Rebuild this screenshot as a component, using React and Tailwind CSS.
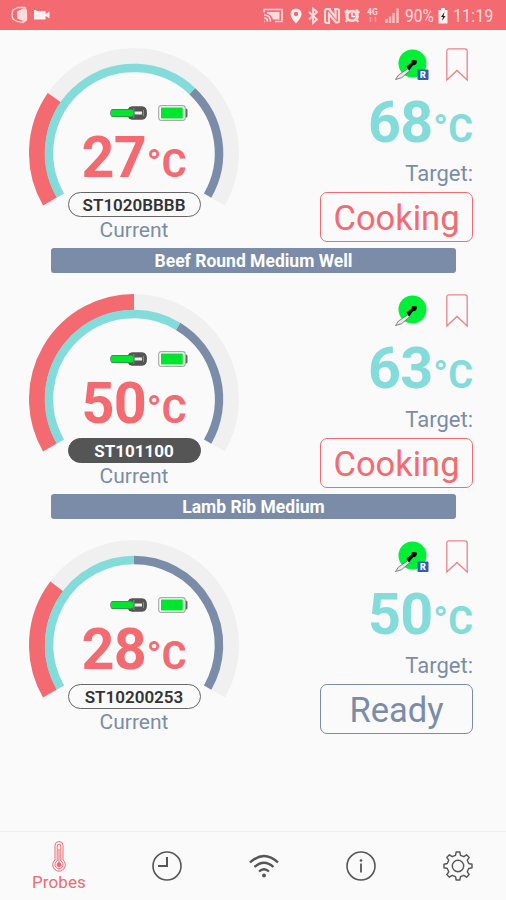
const RED = "#f36a71";
const TEAL = "#83dcda";
const SLATE = "#7a8ca8";

const probes = [
  {
    id: "ST1020BBBB",
    current: 27,
    target: 68,
    status: "Cooking",
    repeater: true,
    recipe: "Beef Round Medium Well",
  },
  {
    id: "ST101100",
    current: 50,
    target: 63,
    status: "Cooking",
    selected: true,
    recipe: "Lamb Rib Medium",
  },
  {
    id: "ST10200253",
    current: 28,
    target: 50,
    status: "Ready",
    repeater: true,
  },
];

// the gauge covers 240 degrees, 0 is bottom left and 100 is bottom right
const point = (value, r) => {
  const angle = ((210 - value * 2.4) * Math.PI) / 180;
  return `${105 + r * Math.cos(angle)} ${105 - r * Math.sin(angle)}`;
};

const arc = (from, to, r) => {
  const large = (to - from) * 2.4 > 180 ? 1 : 0;
  return `M${point(from, r)}A${r} ${r} 0 ${large} 1 ${point(to, r)}`;
};

const Gauge = ({ current, target }) => (
  <svg
    className="col-start-1 row-start-1 h-[160px] w-[210px]"
    viewBox="0 0 210 160"
    fill="none"
  >
    <path d={arc(0, 100, 97)} stroke="#f0f0f0" strokeWidth="16" />
    <path d={arc(0, current, 97)} stroke={RED} strokeWidth="16" />
    <path d={arc(target, 100, 85)} stroke={SLATE} strokeWidth="8.5" />
    <path d={arc(0, target, 85)} stroke={TEAL} strokeWidth="8.5" />
  </svg>
);

const ProbeLevel = () => (
  <svg className="h-[14px] w-[37px]" viewBox="0 0 37 14">
    <path
      d="M22 .3h10q5 0 5 6.700t-5 6.700H22q-3 0-4-2.700H3Q.3 11 .3 7T3 3h15q1-2.700 4-2.700z"
      fill="#555"
    />
    <rect x="1" y="3.600" width="22" height="6.800" rx="1.500" fill="#00e62e" />
    <rect x="24.500" y="5.500" width="7.500" height="3" fill="#eee" />
    <path d="M23.800 2v10M33.500 4v6" stroke="#8b8b8b" strokeWidth="1" />
  </svg>
);

const Battery = () => (
  <svg className="h-[16px] w-[30px]" viewBox="0 0 30 16">
    <rect x="24" y="3.500" width="5.500" height="9" rx="1.500" fill="#666" />
    <rect
      x=".7"
      y=".7"
      width="26.500"
      height="14.600"
      rx="2.500"
      fill="#fff"
      stroke="#a9a9a9"
      strokeWidth="1.200"
    />
    <rect x="3" y="2.500" width="21.800" height="11" fill="#00e62e" />
  </svg>
);

const ProbeLink = ({ repeater }) => (
  <svg className="h-[34px] w-[36px]" viewBox="0 0 36 34">
    <circle cx="18.500" cy="15.500" r="14" fill="#00f038" />
    <path
      d="M1.500 31.500 4.500 27l9.500-6.500 2 2-8.500 7.300z"
      fill="#e8e8e8"
      stroke="#666"
      strokeWidth=".8"
    />
    <path d="m12.500 18.500 5-4 .5-2.500 4 .2 1 .8-.5 2.500-1.500 1.500-2 .3-4 5.200z" fill="#0a0a0a" />
    {repeater && (
      <>
        <rect x="23.500" y="21.500" width="11" height="10.500" rx="1" fill="#2f5fb3" />
        <text
          x="29"
          y="30"
          textAnchor="middle"
          fill="#fff"
          className="font-['Roboto',sans-serif] text-[9px] font-black"
        >
          R
        </text>
      </>
    )}
  </svg>
);

const Bookmark = () => (
  <svg className="h-[34px] w-[22px]" viewBox="0 0 22 34" fill="none">
    <path
      d="M.8 32V3.200Q.8.800 3.200.800h15.600q2.400 0 2.400 2.400V32L11 22.500z"
      stroke="#ee8189"
      strokeWidth="1.300"
    />
  </svg>
);

const Temperature = ({ value }) => (
  <>
    <span className="text-[57.500px] tracking-[-0.8px]">{value}</span>
    <span className="ml-[1px] text-[38px]">°C</span>
  </>
);

const Probe = ({ probe }) => {
  const cooking = probe.status === "Cooking";
  return (
    <section className="h-[246px] pt-[18px]">
      <div className="flex h-[200px] justify-between pr-[33px] pl-[29px]">
        <div className="grid w-[210px] justify-items-center">
          <Gauge current={probe.current} target={probe.target} />
          <div className="col-start-1 row-start-1 flex flex-col items-center pt-[57px]">
            <div className="ml-[29px] flex items-center gap-[11px]">
              <ProbeLevel />
              <Battery />
            </div>
            <div className="mt-[5px] mb-[2px] flex h-[64px] items-baseline leading-[64px] font-bold text-[#f36a71]">
              <Temperature value={probe.current} />
            </div>
            <div
              className={`flex h-[25px] w-[133px] items-center justify-center rounded-full border pt-[2px] text-[17px] ${
                probe.selected
                  ? "border-[#555] bg-[#555] font-bold text-white"
                  : "border-[#666] font-semibold text-[#333]"
              }`}
            >
              {probe.id}
            </div>
            <div className="text-[21px] leading-[26px] text-[#7a8ca8]">
              Current
            </div>
          </div>
        </div>
        <div className="flex flex-col items-end">
          <div className="mr-[5px] flex gap-[16px]">
            <ProbeLink repeater={probe.repeater} />
            <Bookmark />
          </div>
          <div className="mt-[9px] flex h-[64px] items-baseline leading-[64px] font-bold text-[#83dcda]">
            <Temperature value={probe.target} />
          </div>
          <div className="mt-[6px] text-[22px] leading-[26px] text-[#7a8ca8]">
            Target:
          </div>
          <button
            className={`mt-[5px] h-[50px] w-[153px] rounded-[7px] border pt-[3px] text-[34.500px] leading-[45px] ${
              cooking
                ? "border-[#f36a71] text-[#f36a71]"
                : "border-[#7a8ca8] text-[#7a8ca8]"
            }`}
          >
            {probe.status}
          </button>
        </div>
      </div>
      {probe.recipe && (
        <div className="mr-[50px] ml-[51px] flex h-[25px] items-center justify-center rounded-[3px] bg-[#7a8ca8] pt-[2px] text-[17.500px] font-bold text-white">
          {probe.recipe}
        </div>
      )}
    </section>
  );
};

const StatusBar = () => (
  <header className="flex h-[30px] items-center bg-[#f36a71] pr-[12px] pl-[11px] text-[#ffdadb]">
    <svg className="h-[18px] w-[40px]" viewBox="0 0 40 18" fill="none">
      <path
        d="M7 1.500 2 4 .8 9 2 13l4 2.500 6 1 3.500-2.500V5L14 1.500z"
        stroke="currentColor"
        strokeWidth="1.300"
      />
      <path d="M6 5.500 13 2l2 1v11l-2 1.500-7-3z" fill="currentColor" />
      <path
        d="M23 4h2l1 1h8.500v3l4-2.500v7l-4-2.500v3.500H23z"
        fill="#fff0f0"
      />
    </svg>
    <div className="ml-auto flex items-center pt-[1px]">
      <svg className="h-[20px] w-[137px]" viewBox="0 0 137 20" fill="none">
        {/* cast */}
        <path
          d="M1 6.500V3.500h18v12h-7M1 15.500h1M1 12q3.500 0 3.500 3.500M1 9q6.500 0 6.500 6.500"
          stroke="currentColor"
          strokeWidth="1.700"
        />
        <path d="M4 6h12.500v7.500H10Q8.500 8.500 4 7.500z" fill="currentColor" />
        {/* location */}
        <path
          d="M33 2.500a5.500 5.500 0 0 1 5.500 5.500c0 4-5.500 9.500-5.500 9.500S27.500 12 27.500 8A5.500 5.500 0 0 1 33 2.500zm0 3.200a2.200 2.200 0 1 0 0 4.400 2.200 2.200 0 0 0 0-4.400z"
          fill="#fff0f0"
          fillRule="evenodd"
        />
        {/* bluetooth */}
        <path
          d="m46 6 8 7.500-4 3.500V2.500l4 3.500-8 7.500"
          stroke="currentColor"
          strokeWidth="1.900"
        />
        {/* nfc */}
        <path
          d="M68 3h-4q-2 0-2 2v10q0 2 2 2h2V8l7 8.500h1.500q1.500 0 1.500-2V5q0-2-2-2h-3M72.500 3v8L66 3"
          stroke="currentColor"
          strokeWidth="2.100"
        />
        {/* alarm */}
        <path
          d="m81 6 3-3 2 1.500q3-1.300 6 0L94 3l3 3-1.500 2q1 3-.5 5.500l1 2-1.500 1-1.500-1.500q-4 2-8 0L83.500 16.500l-1.500-1 1-2Q81.500 11 82.500 8z"
          fill="currentColor"
        />
        <circle cx="89" cy="10" r="3.500" fill={RED} />
        <path d="M89 7v3.500h3" stroke="#fff" strokeWidth="1.400" />
        <text
          x="104"
          y="9"
          fill="currentColor"
          className="font-['Roboto',sans-serif] text-[8.500px] font-bold"
        >
          4G
        </text>
        <path d="M107.500 11v5M112.500 11v5" stroke="#f9a4a8" strokeWidth="1.400" />
        <path
          d="M123.500 17v-4M127 17v-6.500M130.500 17V7M134.500 17V2.500"
          stroke="#fac0c2"
          strokeWidth="2.500"
        />
      </svg>
      <span className="ml-[5px] w-[30px] origin-left scale-x-[0.86] text-[18px]">
        90%
      </span>
      <svg className="ml-[3px] h-[16px] w-[10px]" viewBox="0 0 10 16">
        <path d="M3 0h4v2h2.500v13.500H.5V2H3z" fill="#fff0f0" />
        <path d="M6.500 4 3 9h2l-1 4 3.500-5H5.500z" fill="#222" />
      </svg>
      <span className="ml-[5px] w-[41px] origin-left scale-x-[0.9] text-[18px]">
        11:19
      </span>
    </div>
  </header>
);

const Nav = () => (
  <nav className="flex h-[69px] items-center border-t border-[#eee] pl-[11px] text-[#555]">
    <a className="flex w-[96px] flex-col items-center text-[#ee6a72]">
      <svg
        className="h-[31px] w-[14px]"
        viewBox="0 0 14 31"
        fill="none"
        stroke="currentColor"
      >
        <path d="M3 19V4.500a4 4 0 0 1 8 0V19a6.300 6.300 0 1 1-8 0z" />
        <path d="M5.200 20V5a1.800 1.800 0 0 1 3.600 0v15a4 4 0 1 1-3.600 0z" />
        <path d="M7 8v15" />
        <circle cx="7" cy="23.700" r="2" fill="currentColor" />
      </svg>
      <span className="text-[17px] leading-[20px] tracking-[0.1px]">
        Probes
      </span>
    </a>
    <a className="flex w-[119px] justify-center">
      <svg
        className="size-[30px]"
        viewBox="0 0 30 30"
        fill="none"
        stroke="currentColor"
        strokeWidth="1.600"
      >
        <circle cx="15" cy="15" r="14" />
        <path d="M15 6v9H6" strokeWidth="2" />
      </svg>
    </a>
    <a className="flex w-[76px] justify-center">
      <svg
        className="h-[24px] w-[30px]"
        viewBox="0 0 30 24"
        fill="none"
        stroke="currentColor"
        strokeWidth="2.300"
      >
        <path d="M1 8.500Q15-4.500 29 8.500M5.500 13Q15 4.500 24.500 13M10 17.500Q15 13 20 17.500" />
        <circle cx="15" cy="21.500" r="2" fill="currentColor" stroke="none" />
      </svg>
    </a>
    <a className="flex w-[118px] justify-center">
      <svg
        className="size-[30px]"
        viewBox="0 0 30 30"
        fill="none"
        stroke="currentColor"
        strokeWidth="1.600"
      >
        <circle cx="15" cy="15" r="14" />
        <path d="M15 12.500v9" strokeWidth="1.800" />
        <circle cx="15" cy="9.500" r="1.300" fill="currentColor" stroke="none" />
      </svg>
    </a>
    <a className="flex w-[76px] justify-center">
      <svg
        className="size-[30px]"
        viewBox="0 0 30 30"
        fill="none"
        stroke="currentColor"
        strokeWidth="1.400"
        strokeLinejoin="round"
      >
        <path d="M12.500 4.300 13.200 1h3.600l.7 3.300 3.300 1.400L23.600 3.800l2.600 2.600-1.900 2.800 1.400 3.300 3.300.7v3.600l-3.300.7-1.400 3.300 1.900 2.800-2.600 2.600-2.800-1.900-3.300 1.400-.7 3.300h-3.600l-.7-3.300-3.300-1.400-2.800 1.900-2.600-2.600 1.900-2.800-1.400-3.300L1 16.800v-3.600l3.300-.7 1.400-3.300-1.900-2.800 2.600-2.600 2.800 1.900z" />
        <circle cx="15" cy="15" r="5.700" />
      </svg>
    </a>
  </nav>
);

const App = () => {
  return (
    <div className="flex h-[900px] w-[506px] flex-col overflow-hidden bg-[#fafafa] font-['Roboto',sans-serif]">
      <StatusBar />
      <main className="flex-1">
        {probes.map((probe) => (
          <Probe key={probe.id} probe={probe} />
        ))}
      </main>
      <Nav />
    </div>
  );
};

export default App;
